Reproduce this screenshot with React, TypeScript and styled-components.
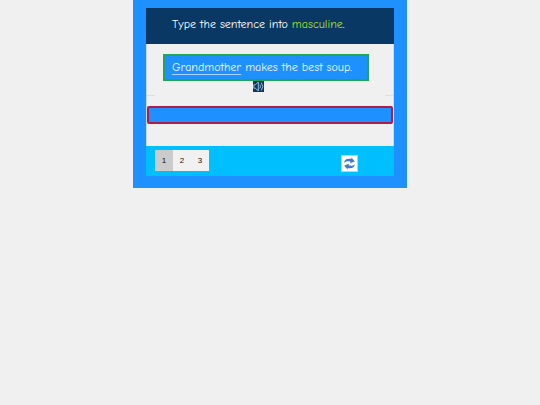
import React, { useState } from "react";
import styled, { createGlobalStyle } from "styled-components";

const GlobalStyle = createGlobalStyle`
  *, *::before, *::after { box-sizing: border-box; }
  body {
    margin: 0;
    background: #f0f0f0;
    font-family: "Comic Sans MS", "Comic Neue", "Open Sans", sans-serif;
  }
`;

const Frame = styled.main`
  width: 100%;
  max-width: 274px;
  margin: 0 auto;
  padding: 8px 13px 12px;
  background: #1e90ff;
`;

const Header = styled.header`
  padding: 6px 16px 10px 26px;
  background: #083863;
`;

const Title = styled.h1`
  margin: 0;
  font-size: 12px;
  font-weight: 400;
  line-height: 20px;
  color: #fff;
  white-space: nowrap;
`;

const Highlight = styled.span`
  color: #a8e02c;
`;

const Body = styled.section`
  display: flex;
  flex-direction: column;
  padding: 10px 0 22px;
  background: #f0f0f0;
  border-left: 1px solid #c4dcf2;
  border-right: 1px solid #c4dcf2;
`;

const Sentence = styled.p`
  align-self: flex-start;
  min-width: 206px;
  margin: 0 0 0 16px;
  padding: 1px 10px 2px 7px;
  border: 2px solid #22a559;
  background: #1e90ff;
  color: #f0f8ff;
  font-size: 12px;
  line-height: 20px;
  white-space: nowrap;
`;

const Subject = styled.span`
  text-decoration: underline 1px #a9d5ff;
  text-decoration-skip-ink: none;
  text-underline-offset: 3px;
`;

const SoundButton = styled.button`
  display: flex;
  align-self: flex-start;
  margin: 0 0 0 106px;
  padding: 0;
  border: 0;
  background: #083863;
  cursor: pointer;
`;

const Divider = styled.div`
  display: flex;
  justify-content: space-between;
  height: 4px;
  margin-bottom: 10px;

  &::before, &::after {
    content: "";
    width: 8px;
    border-bottom: 1px solid #dedede;
  }
`;

const Answer = styled.input`
  width: 100%;
  height: 18px;
  padding: 0 6px;
  border: 2px solid #b01c48;
  border-radius: 2px;
  outline: 0;
  background: #1e90ff;
  color: #fff;
  font: inherit;
  font-size: 12px;
`;

const Footer = styled.footer`
  display: flex;
  align-items: flex-start;
  justify-content: space-between;
  padding: 4px 36px 4px 9px;
  background: #00bfff;
`;

const Pages = styled.nav`
  display: flex;
`;

const PageButton = styled.button<{ $active: boolean }>`
  width: 18px;
  height: 21px;
  padding: 0;
  border: 0;
  background: ${({ $active }) => ($active ? "#cbcbcb" : "#f1f1f1")};
  color: #111;
  font-family: "Liberation Sans", Arial, sans-serif;
  font-size: 8px;
  cursor: pointer;
`;

const ResetButton = styled.button`
  display: flex;
  align-items: center;
  justify-content: center;
  width: 17px;
  height: 17px;
  margin-top: 5px;
  padding: 0;
  border: 1px solid #9fdcff;
  background: #fff;
  cursor: pointer;
`;

const SpeakerIcon = () => (
  <svg width="11" height="11" viewBox="0 0 11 11" fill="none" stroke="#9dbdd8" aria-hidden="true">
    <path d="M.8 3.800h1.700L5.300 1v9L2.500 7.200H.8z" />
    <path d="M6.800 3.500q1.500 2 0 4M8.300 1.500q3 4 0 8" />
  </svg>
);

const RefreshIcon = () => (
  <svg width="13" height="13" viewBox="0 0 13 13" fill="#4279cf" aria-hidden="true">
    <path d="M1 5.800C1.500 2.500 4 1.200 8.200 2L8.500.5 11.800 4.500 7 6.200 7.500 4.700C4.800 3.800 3 4.200 1 5.800Z" />
    <path d="M12 7.200C11.500 10.500 9 11.800 4.800 11L4.500 12.500 1.200 8.500 6 6.800 5.500 8.300C8.200 9.200 10 8.800 12 7.200Z" />
  </svg>
);

export default function App() {
  const [page, setPage] = useState(1);
  const [answer, setAnswer] = useState("");

  return (
    <>
      <GlobalStyle />
      <Frame>
        <Header>
          <Title>
            Type the sentence into <Highlight>masculine</Highlight>.
          </Title>
        </Header>
        <Body>
          <Sentence>
            <Subject>Grandmother</Subject> makes the best soup.
          </Sentence>
          <SoundButton type="button" aria-label="Listen">
            <SpeakerIcon />
          </SoundButton>
          <Divider />
          <Answer
            aria-label="Answer"
            value={answer}
            onChange={(event) => setAnswer(event.target.value)}
          />
        </Body>
        <Footer>
          <Pages aria-label="Questions">
            {[1, 2, 3].map((n) => (
              <PageButton key={n} type="button" $active={n === page} onClick={() => setPage(n)}>
                {n}
              </PageButton>
            ))}
          </Pages>
          <ResetButton type="button" aria-label="Reset" onClick={() => setAnswer("")}>
            <RefreshIcon />
          </ResetButton>
        </Footer>
      </Frame>
    </>
  );
}
